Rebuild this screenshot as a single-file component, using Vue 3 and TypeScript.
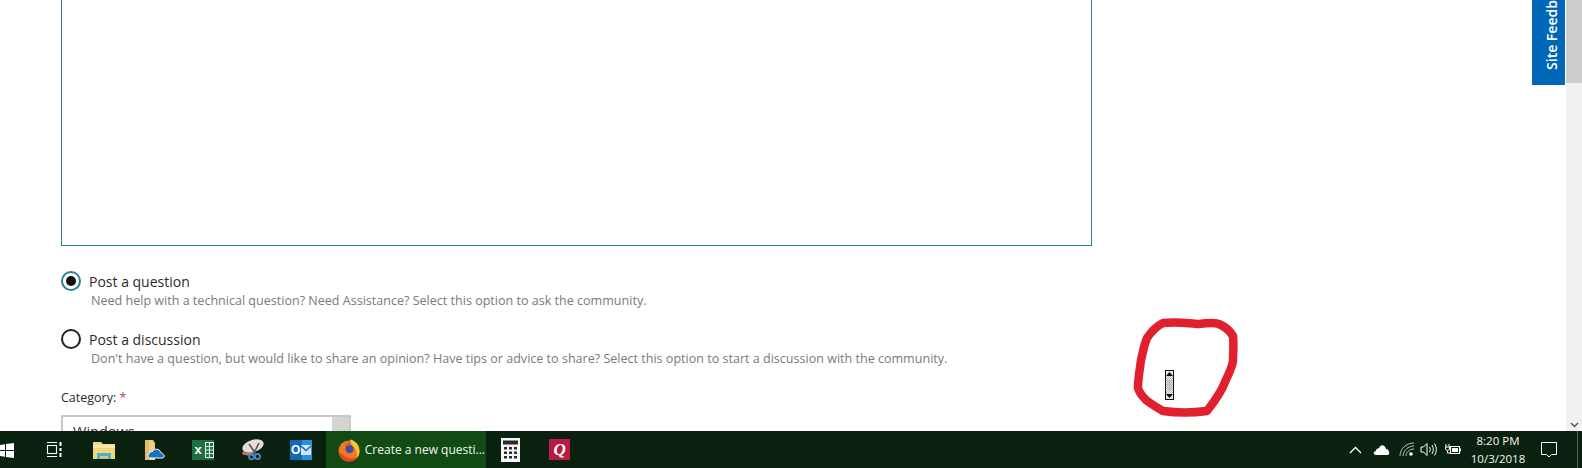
<script setup lang="ts">
interface PostType {
  id: string
  label: string
  hint: string
  checked: boolean
}

const postTypes: PostType[] = [
  {
    id: 'question',
    label: 'Post a question',
    hint: 'Need help with a technical question? Need Assistance? Select this option to ask the community.',
    checked: true,
  },
  {
    id: 'discussion',
    label: 'Post a discussion',
    hint: "Don't have a question, but would like to share an opinion? Have tips or advice to share? Select this option to start a discussion with the community.",
    checked: false,
  },
]
</script>

<template>
  <div class="screen">
    <div class="window">
      <main class="page">
        <div class="editor"></div>

        <div class="post-types">
          <div v-for="item in postTypes" :key="item.id" class="post-type">
            <span class="radio" :class="{ checked: item.checked }"></span>
            <div class="post-copy">
              <div class="post-label">{{ item.label }}</div>
              <div class="post-hint">{{ item.hint }}</div>
            </div>
          </div>
        </div>

        <div class="field-label">Category: <span class="required">*</span></div>
        <div class="select">
          <span>Windows</span>
          <span class="select-arrow">
            <svg width="10" height="8" viewBox="0 0 10 8"><path d="M1 2l4 4 4-4" fill="none" stroke="#555" stroke-width="1.2" /></svg>
          </span>
        </div>
      </main>

      <div class="feedback-tab"><span>Site Feedback</span></div>

      <aside class="scrollbar">
        <div class="scroll-thumb"></div>
        <svg class="scroll-down" width="9" height="6" viewBox="0 0 9 6"><path d="M1 1l3.5 3.5L8 1" fill="none" stroke="#505050" stroke-width="1.4" /></svg>
      </aside>

      <svg class="annotation" width="130" height="110" viewBox="0 0 130 110">
        <defs>
          <pattern id="dither" width="2" height="2" patternUnits="userSpaceOnUse">
            <rect width="2" height="2" fill="#fff" />
            <rect width="1" height="1" fill="#a8a8a8" />
            <rect x="1" y="1" width="1" height="1" fill="#a8a8a8" />
          </pattern>
        </defs>
        <path
          d="M43 13C60 11 70 14 79 14 86 13 93 12 99 14 106 17 110 21 113 26 114 35 113 43 113 51 112 58 108 65 105 72 101 83 94 92 87 101 72 103 57 103 43 101 36 97 31 94 26 90 22 86 19 82 18 78 18 68 20 59 21 50 23 42 24 35 27 28 31 22 37 16 43 13Z"
          fill="none"
          stroke="#e0202e"
          stroke-width="8.5"
          stroke-linejoin="round"
        />
        <rect x="45.5" y="60.5" width="8" height="29" fill="url(#dither)" stroke="#111" />
        <rect x="46" y="61" width="7" height="5" fill="#e4e4e4" />
        <rect x="46" y="84" width="7" height="5" fill="#e4e4e4" />
        <path d="M49.5 62l3.5 4h-7z M49.5 88l-3.5-4h7z" fill="#111" />
        <rect x="47" y="70" width="5" height="10" fill="#c4c4c4" />
      </svg>
    </div>

    <footer class="taskbar">
      <div class="start">
        <svg width="15" height="15" viewBox="0 0 15 15" fill="#fff">
          <path d="M0 2.2l6-.9v5.8H0zM7 1.1L15 0v7.1H7zM0 8h6v5.8l-6-.9zM7 8h8v7l-8-1.1z" />
        </svg>
      </div>

      <div class="task-btn">
        <svg width="17" height="17" viewBox="0 0 17 17" fill="none" stroke="#fff" stroke-width="1.1">
          <path d="M1 1.5h10M1 15.5h10" />
          <rect x="1.5" y="4.5" width="9" height="8" />
          <path d="M14.5 1v4M14.5 7v3M14.5 12v4" stroke-width="2" />
        </svg>
      </div>

      <div class="task-btn">
        <svg width="22" height="20" viewBox="0 0 22 20">
          <path d="M0 2h8l2 2h12v15H0z" fill="#f4d77d" />
          <path d="M0 5h22v3H0z" fill="#fbe8a6" />
          <path d="M4 19v-6h14v6h-3v-3H7v3z" fill="#4fb1cf" />
          <rect x="7" y="16" width="8" height="3" fill="#d7c47f" />
        </svg>
      </div>

      <div class="task-btn task-shift">
        <svg width="22" height="22" viewBox="0 0 22 22">
          <path d="M1 1h8l2 3v17H1z" fill="#f0cf85" />
          <path d="M1 1h4v20H1z" fill="#e3b96a" />
          <path d="M6 19c-2 0-3-3-1-4 0-2 2-3 3-2 1-3 6-4 8-1 1 1 1 2 1 2 3 0 5 5 1 5z" fill="#1d6fc4" stroke="#fff" stroke-width="1" />
        </svg>
      </div>

      <div class="task-btn">
        <span class="excel">
          <span class="excel-x">x</span>
          <svg width="9" height="18" viewBox="0 0 9 18" fill="none" stroke="#dff0e6" stroke-width="1">
            <rect x="0.5" y="1.5" width="8" height="15" />
            <path d="M0 5.5h9M0 9h9M0 12.5h9M4.500 1v16" />
          </svg>
        </span>
      </div>

      <div class="task-btn">
        <svg width="24" height="22" viewBox="0 0 24 22">
          <ellipse cx="13" cy="7" rx="11" ry="6" transform="rotate(-18 13 7)" fill="#e8dcd6" />
          <path d="M3 12c3 3 9 2 13-1l-1 3c-4 3-9 3-13 1z" fill="#c0766a" />
          <path d="M9 5l7 10M19 4l-6 12" stroke="#43566a" stroke-width="1.6" />
          <circle cx="17.5" cy="17.5" r="2.6" fill="none" stroke="#3f8fc4" stroke-width="1.8" />
          <circle cx="11.5" cy="18" r="2.4" fill="none" stroke="#3f8fc4" stroke-width="1.8" />
        </svg>
      </div>

      <div class="task-btn">
        <span class="outlook">
          <span class="outlook-o">O</span>
          <svg class="outlook-mail" width="10" height="10" viewBox="0 0 10 10">
            <rect width="10" height="10" fill="#cfe6f7" />
            <path d="M0 1l5 4.5L10 1" fill="none" stroke="#0f6ab8" stroke-width="1.4" />
          </svg>
        </span>
      </div>

      <div class="task-active">
        <svg width="24" height="24" viewBox="0 0 24 24">
          <circle cx="12" cy="13" r="10.5" fill="#ef7a1f" />
          <path d="M13 1.5c6 1 9.5 6 9.5 11.5 0 3-1 5.5-3 7.5 1-3.500 1-8-2.500-11-2.500-2-3.500-5-4-8z" fill="#fcc42b" />
          <path d="M1.5 13c.5 6 5 10.5 10.5 10.5 4 0 7-2 9-5-3 2-8 3-12 .5-3.500-2-6-3.500-7.500-6z" fill="#e8402f" />
          <circle cx="12.5" cy="11" r="4" fill="#3b4fb0" />
          <path d="M7 9c1-3 4-5 7-6.500-1 2-1 3 .5 4.500-3 0-5 .5-7.500 2z" fill="#f25a29" />
        </svg>
        <span class="task-title">Create a new questi...</span>
      </div>

      <div class="task-btn">
        <svg width="19" height="24" viewBox="0 0 19 24">
          <rect width="19" height="24" fill="#f7f7f7" />
          <rect x="2" y="2.5" width="15" height="4" fill="#2a2a2a" />
          <g fill="#2a2a2a">
            <rect x="3" y="9" width="3" height="2.5" /><rect x="8" y="9" width="3" height="2.5" /><rect x="13" y="9" width="3" height="2.5" />
            <rect x="3" y="13.5" width="3" height="2.5" /><rect x="8" y="13.5" width="3" height="2.5" /><rect x="13" y="13.5" width="3" height="2.5" />
            <rect x="3" y="18" width="3" height="2.5" /><rect x="8" y="18" width="3" height="2.5" /><rect x="13" y="18" width="3" height="2.5" />
          </g>
        </svg>
      </div>

      <div class="task-btn">
        <span class="quicken">Q</span>
      </div>

      <div class="tray">
        <svg class="tray-caret" width="13" height="8" viewBox="0 0 13 8"><path d="M1 7l5.500-5.500L12 7" fill="none" stroke="#fff" stroke-width="1.3" /></svg>
        <svg class="tray-cloud" width="17" height="11" viewBox="0 0 17 11">
          <path d="M3 11C0 11 0 7 3 7c0-2 2-3 3-2.500C7 0 12 0 13 5c3 0 5 6 1 6z" fill="#fff" />
        </svg>
        <svg class="tray-wifi" width="16" height="15" viewBox="0 0 16 15" fill="none" stroke="#b9c2ba" stroke-width="1">
          <path d="M1 14C1 7 7 1 15 1M4 14c0-5 5-10 11-10M7 14c0-3 3-7 8-7" />
          <circle cx="12" cy="12" r="1.8" fill="#fff" stroke="none" />
        </svg>
        <svg class="tray-volume" width="17" height="15" viewBox="0 0 17 15" fill="none" stroke="#fff" stroke-width="1">
          <path d="M1 5h2.500L7 1.500v12L3.500 10H1z" />
          <path d="M9.500 5c1 1.500 1 3.500 0 5M12 3c1.800 3 1.800 6 0 9M14.500 1.500c2.400 4 2.400 8 0 12" />
        </svg>
        <svg class="tray-battery" width="16" height="11" viewBox="0 0 16 11">
          <path d="M1 0v3M4 0v3M0.500 3h4v2.500l-2 1-2-1zM2.500 6.500V9h3" fill="none" stroke="#fff" stroke-width="1" />
          <rect x="5.5" y="2.5" width="9" height="7" fill="none" stroke="#fff" />
          <rect x="7" y="4" width="6" height="4" fill="#fff" />
          <rect x="15" y="4.5" width="1" height="3" fill="#fff" />
        </svg>
        <div class="clock">
          <div>8:20 PM</div>
          <div>10/3/2018</div>
        </div>
        <svg class="tray-note" width="16" height="16" viewBox="0 0 16 16">
          <path d="M.5.500h15v12h-5L8 15l-2.500-2.500h-5z" fill="none" stroke="#fff" />
        </svg>
        <span class="show-desktop"></span>
      </div>
    </footer>
  </div>
</template>

<style scoped>
.screen {
  width: 1582px;
  height: 468px;
  display: flex;
  flex-direction: column;
  overflow: hidden;
  background: #fff;
  font-family: "Open Sans", "Noto Sans", "Liberation Sans", sans-serif;
}

.window {
  position: relative;
  flex: 1;
  min-height: 0;
  display: flex;
  overflow: hidden;
}

.page {
  flex: 1;
  min-width: 0;
  padding-left: 61px;
  margin-top: -2px;
}

.editor {
  width: 1031px;
  height: 248px;
  box-sizing: border-box;
  border: 1px solid #2f7f8f;
}

.post-types {
  margin-top: 26px;
  display: grid;
  gap: 21px;
}

.post-type {
  display: flex;
  gap: 8px;
}

.radio {
  width: 20px;
  height: 20px;
  margin-top: -1px;
  flex: none;
  box-sizing: border-box;
  border: 2px solid #222;
  border-radius: 50%;
  display: grid;
  place-items: center;
}

.radio.checked {
  border-color: #2f7f95;
}

.radio.checked::after {
  content: "";
  width: 10px;
  height: 10px;
  border-radius: 50%;
  background: #111;
}

.post-label {
  font-size: 14px;
  line-height: 20px;
  color: #2b2b2b;
}

.post-hint {
  margin-left: 2px;
  font-size: 12.55px;
  line-height: 17px;
  color: #7a7a7a;
}

.field-label {
  margin-top: 22px;
  font-size: 12.5px;
  line-height: 17px;
  color: #2b2b2b;
}

.required {
  color: #c8453f;
}

.select {
  width: 290px;
  height: 40px;
  margin-top: 9px;
  box-sizing: border-box;
  border: 2px solid #c9c9c9;
  padding: 5px 0 0 10px;
  display: flex;
  justify-content: space-between;
  font-size: 14.5px;
  color: #333;
}

.select-arrow {
  width: 17px;
  height: 34px;
  margin-top: -5px;
  background: #d4d4d4;
  display: flex;
  justify-content: center;
  padding-top: 12px;
  box-sizing: border-box;
}

.feedback-tab {
  position: absolute;
  top: 0;
  right: 17px;
  width: 33px;
  height: 85px;
  background: #0067b8;
  color: #fff;
  overflow: hidden;
}

.feedback-tab span {
  position: absolute;
  left: 11px;
  bottom: 15px;
  writing-mode: vertical-rl;
  transform: rotate(180deg);
  white-space: nowrap;
  font-size: 14px;
  line-height: 18px;
  font-weight: 600;
}

.scrollbar {
  width: 16px;
  flex: none;
  background: #f1f1f1;
  position: relative;
  display: flex;
  flex-direction: column;
  justify-content: space-between;
  align-items: center;
  padding-bottom: 3px;
  box-sizing: border-box;
}

.scroll-thumb {
  width: 100%;
  height: 83px;
  background: #cdcdcd;
}

.annotation {
  position: absolute;
  left: 1120px;
  top: 310px;
}

.taskbar {
  height: 37px;
  flex: none;
  display: flex;
  align-items: center;
  background: #0a2110;
  color: #fff;
}

.start {
  width: 30px;
  height: 100%;
  flex: none;
  display: flex;
  align-items: center;
}

.start svg {
  margin-left: -1px;
  margin-top: 2px;
}

.task-btn {
  width: 49.3px;
  height: 100%;
  flex: none;
  display: grid;
  place-items: center;
}

.task-shift svg {
  margin-left: 4px;
}

.task-active {
  width: 160px;
  height: 100%;
  flex: none;
  display: flex;
  align-items: center;
  gap: 4px;
  padding-left: 11px;
  box-sizing: border-box;
  background: #114a13;
}

.task-title {
  font-size: 12px;
  white-space: nowrap;
  color: #f2f6f2;
}

.excel {
  width: 22px;
  height: 20px;
  background: #1d7044;
  display: flex;
  align-items: center;
  justify-content: space-between;
  padding-left: 3px;
  box-sizing: border-box;
}

.excel-x {
  font-size: 13px;
  font-weight: 700;
  line-height: 1;
  color: #fff;
  font-family: "Liberation Sans", sans-serif;
}

.outlook {
  width: 22px;
  height: 20px;
  display: flex;
  align-items: center;
  justify-content: space-between;
  background: linear-gradient(90deg, #0f6ab8 55%, #2d8ed6 55%);
  padding-right: 1px;
  box-sizing: border-box;
}

.outlook-o {
  width: 11px;
  text-align: center;
  font-size: 12px;
  font-weight: 700;
  line-height: 1;
  color: #fff;
  font-family: "Liberation Sans", sans-serif;
}

.quicken {
  width: 21px;
  height: 21px;
  display: grid;
  place-items: center;
  background: #b81a41;
  color: #fff;
  font-family: "Liberation Serif", serif;
  font-size: 17px;
  font-weight: 700;
  font-style: italic;
  line-height: 1;
}

.tray {
  flex: 1;
  min-width: 0;
  height: 100%;
  position: relative;
  display: flex;
  align-items: center;
  justify-content: flex-end;
}

.tray-caret {
  margin-right: 11px;
}

.tray-cloud {
  margin-right: 9px;
}

.tray-wifi {
  margin-right: 5px;
}

.tray-volume {
  margin-right: 8px;
}

.tray-battery {
  margin-right: 4px;
}

.clock {
  width: 66px;
  text-align: center;
  font-size: 11.5px;
  line-height: 18px;
  color: #f2f6f2;
}

.tray-note {
  margin-left: 10px;
  margin-right: 25px;
}

.show-desktop {
  position: absolute;
  right: 4px;
  top: 0;
  bottom: 0;
  width: 1px;
  background: #51665a;
}
</style>
